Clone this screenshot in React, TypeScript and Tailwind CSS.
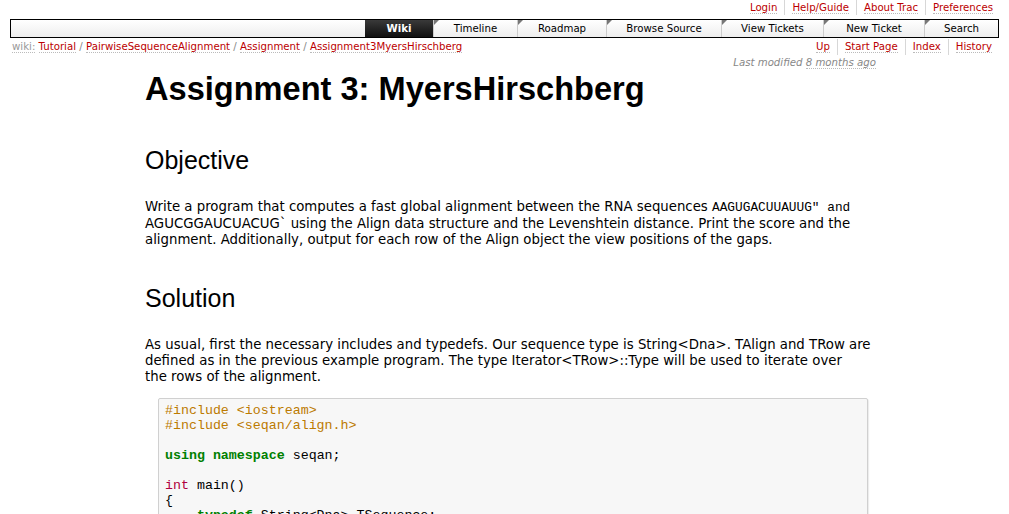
import React from 'react';

const link = 'text-[#bb0000] border-b border-dotted border-[#bbbbbb]';

function Corner() {
  return (
    <svg className="absolute left-0 top-0" width="5" height="5" viewBox="0 0 5 5">
      <polygon points="0,0 5,0 0,5" fill="#777" />
    </svg>
  );
}

const navItems = [
  { label: 'Timeline', w: 'w-[84px]' },
  { label: 'Roadmap', w: 'w-[89px]' },
  { label: 'Browse Source', w: 'w-[115px]' },
  { label: 'View Tickets', w: 'w-[102px]' },
  { label: 'New Ticket', w: 'w-[101px]' },
  { label: 'Search', w: 'w-[74px]' },
];

export default function App() {
  return (
    <div className="w-[1009px] h-[514px] overflow-hidden bg-white text-black font-['DejaVu_Sans',Verdana,sans-serif] text-[10.2px]">
      {/* meta nav */}
      <div className="flex justify-end pr-[16px] h-[15px] leading-[15px]">
        {['Login', 'Help/Guide', 'About Trac', 'Preferences'].map((t, i) => (
          <span key={t} className={`px-[7px] ${i > 0 ? 'border-l border-[#d7d7d7]' : ''} ${i === 3 ? 'pr-0' : ''}`}>
            <span className={link}>{t}</span>
          </span>
        ))}
      </div>

      {/* main nav */}
      <div className="mt-[4px] ml-[10px] w-[989px] h-[19px] border border-black flex bg-gradient-to-b from-white to-[#eeeeee]">
        <div className="flex-1" />
        <div className="w-[68px] h-full bg-gradient-to-b from-[#3a3a3a] to-[#111] text-white font-bold text-center leading-[17px]">Wiki</div>
        {navItems.map((n) => (
          <div key={n.label} className={`relative ${n.w} h-full border-l border-[#cccccc] text-center leading-[17px] text-black`}>
            <Corner />
            {n.label}
          </div>
        ))}
      </div>

      {/* breadcrumb + ctxtnav */}
      <div className="flex justify-between h-[16px] leading-[16px] mt-[1px] pl-[12px] pr-[17px]">
        <div>
          <span className="text-[#999] border-b border-dotted border-[#bbbbbb]">wiki:</span>{' '}
          <span className={link}>Tutorial</span> <span className="text-[#888]">/</span>{' '}
          <span className={link}>PairwiseSequenceAlignment</span> <span className="text-[#888]">/</span>{' '}
          <span className={link}>Assignment</span> <span className="text-[#888]">/</span>{' '}
          <span className={link}>Assignment3MyersHirschberg</span>
        </div>
        <div className="flex">
          {['Up', 'Start Page', 'Index', 'History'].map((t, i) => (
            <span key={t} className={`px-[7px] ${i > 0 ? 'border-l border-[#d7d7d7]' : ''} ${i === 3 ? 'pr-0' : ''}`}>
              <span className={link}>{t}</span>
            </span>
          ))}
        </div>
      </div>
      <div className="flex justify-end pr-[133px] h-[16px] leading-[16px] italic text-[#888]">
        <span>
          Last modified <span className="border-b border-dotted border-[#bbbbbb]">8 months ago</span>
        </span>
      </div>

      {/* content */}
      <div className="ml-[145px] w-[740px]">
        <h1 className="mt-[2px] font-['Liberation_Sans',Arial,sans-serif] font-bold text-[32.6px] leading-[32px]">
          Assignment 3: MyersHirschberg
        </h1>
        <h2 className="mt-[43px] font-['Liberation_Sans',Arial,sans-serif] text-[25px] leading-[25px]">Objective</h2>
        <p className="mt-[26px] text-[13.3px] leading-[16px] whitespace-nowrap">
          Write a program that computes a fast global alignment between the RNA sequences{' '}
          <span className="font-['Liberation_Mono',monospace] text-[12.8px]">AAGUGACUUAUUG"  and</span>
          <br />
          AGUCGGAUCUACUG` using the Align data structure and the Levenshtein distance. Print the score and the
          <br />
          alignment. Additionally, output for each row of the Align object the view positions of the gaps.
        </p>
        <h2 className="mt-[38px] font-['Liberation_Sans',Arial,sans-serif] text-[25px] leading-[25px]">Solution</h2>
        <p className="mt-[26px] text-[13.3px] leading-[16px] whitespace-nowrap">
          As usual, first the necessary includes and typedefs. Our sequence type is String&lt;Dna&gt;. TAlign and TRow are
          <br />
          defined as in the previous example program. The type Iterator&lt;TRow&gt;::Type will be used to iterate over
          <br />
          the rows of the alignment.
        </p>
        <pre className="mt-[13px] ml-[13px] w-[710px] border border-[#d0d0d0] rounded-[2px] bg-[#f7f7f7] pt-[4px] pl-[6px] font-['Liberation_Mono',monospace] text-[13.3px] leading-[15px] h-[140px] shadow-[1px_1px_1px_rgba(0,0,0,0.08)]">
          <span className="text-[#bc7a00]">#include &lt;iostream&gt;</span>
          {'\n'}
          <span className="text-[#bc7a00]">#include &lt;seqan/align.h&gt;</span>
          {'\n\n'}
          <span className="text-[#008000] font-bold">using</span> <span className="text-[#008000] font-bold">namespace</span> seqan;
          {'\n\n'}
          <span className="text-[#b00040]">int</span> main()
          {'\n'}
          {'{'}
          {'\n'}
          {'    '}
          <span className="text-[#008000] font-bold">typedef</span> String&lt;Dna&gt; TSequence;
        </pre>
      </div>
    </div>
  );
}
